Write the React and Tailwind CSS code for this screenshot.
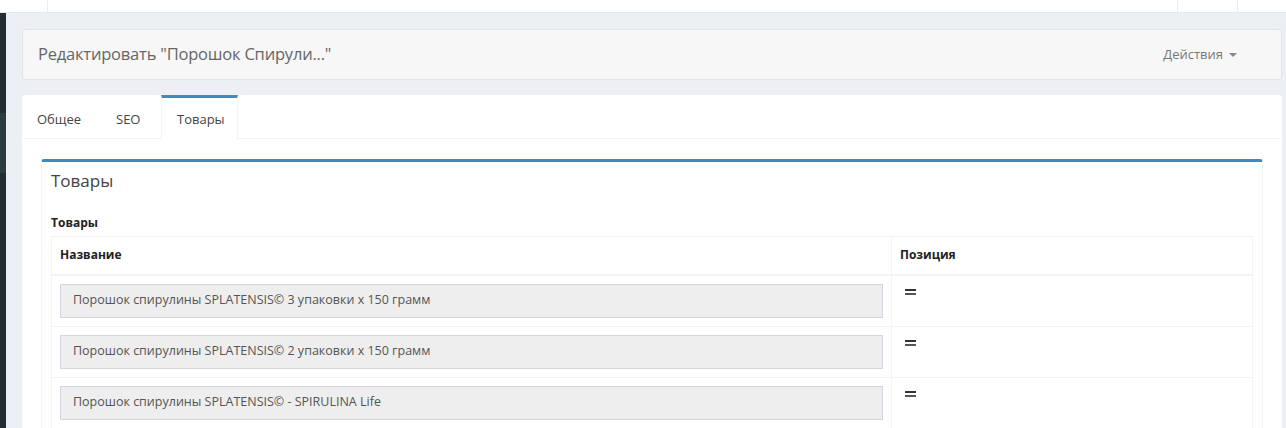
import React from 'react';

const products = [
  'Порошок спирулины SPLATENSIS© 3 упаковки x 150 грамм',
  'Порошок спирулины SPLATENSIS© 2 упаковки x 150 грамм',
  'Порошок спирулины SPLATENSIS© - SPIRULINA Life',
];

const DragHandle = () => (
  <div className="flex flex-col gap-[2px] w-[11px] mt-[5px]">
    <div className="h-[2px] bg-[#333]" />
    <div className="h-[2px] bg-[#555]" />
  </div>
);

export default function App() {
  return (
    <div className="relative w-[1286px] h-[428px] overflow-hidden bg-[#ecf0f5] text-[#333]" style={{ fontFamily: '"Open Sans", "Noto Sans", sans-serif' }}>
      {/* Top bar */}
      <div className="flex h-[13px] bg-white border-b border-[#e5e8ee]">
        <div className="w-[48px] border-r border-[#eee]" />
        <div className="flex-1" />
        <div className="w-[60px] border-l border-[#eee]" />
        <div className="w-[49px] border-l border-[#eee]" />
      </div>

      <div className="flex h-[415px]">
        {/* Sidebar edge */}
        <div className="w-[6px] flex flex-col bg-[#222d32]">
          <div className="h-[100px]" />
          <div className="h-[60px] bg-[#2c3b41]" />
        </div>

        {/* Content */}
        <div className="flex-1 pl-[16px] pr-[4px] pt-[16px]">
          {/* Page header */}
          <div className="h-[51px] flex items-center justify-between px-[15px] bg-[#f7f7f7] border border-[#e3e5e8] rounded-[3px]">
            <h1 className="text-[16.5px] text-[#666] tracking-[-0.2px]">Редактировать "Порошок Спирули..."</h1>
            <div className="flex items-center gap-[6px] pr-[29px] text-[13px] text-[#777]">
              Действия
              <span className="w-0 h-0 border-l-[4px] border-r-[4px] border-t-[4px] border-l-transparent border-r-transparent border-t-[#888]" />
            </div>
          </div>

          {/* Tabs panel */}
          <div className="mt-[15px] bg-white rounded-t-[3px] h-[400px]">
            <div className="flex h-[44px] border-b border-[#f4f4f4] text-[13px] text-[#444]">
              <div className="w-[79px] pl-[15px] pt-[15px]">Общее</div>
              <div className="w-[60px] pl-[15px] pt-[15px]">SEO</div>
              <div className="w-[77px] border-t-[3px] border-[#3c8dbc] border-x border-x-[#f4f4f4] pt-[12px] pl-[15px] bg-white h-[45px]">Товары</div>
            </div>

            <div className="px-[19px] pt-[20px]">
              <div className="border-t-[3px] border-[#3c8dbc] rounded-t-[3px] border-x border-x-[#f4f4f4] px-[9px] h-[300px]">
                <h3 className="text-[17px] leading-[24px] text-[#444] pt-[7px] pb-[17px]">Товары</h3>
                <div className="text-[12px] leading-[17px] font-bold text-[#222] pt-[4px] pb-[5px]">Товары</div>
                <table className="w-full border-collapse border border-[#f4f4f4] text-[12px]">
                  <thead>
                    <tr className="h-[38px] border-b-2 border-[#f4f4f4]">
                      <th className="w-[840px] text-left font-bold text-[#222] px-[8px] border-r border-[#f4f4f4]">Название</th>
                      <th className="text-left font-bold text-[#222] px-[8px]">Позиция</th>
                    </tr>
                  </thead>
                  <tbody>
                    {products.map((p) => (
                      <tr key={p} className="h-[51px] border-b border-[#f4f4f4]">
                        <td className="px-[8px] py-[8px] border-r border-[#f4f4f4] align-top">
                          <div className="h-[34px] flex items-center px-[12px] bg-[#eee] border border-[#d2d6de] text-[12.5px] text-[#555]">{p}</div>
                        </td>
                        <td className="px-[13px] py-[8px] align-top">
                          <DragHandle />
                        </td>
                      </tr>
                    ))}
                  </tbody>
                </table>
              </div>
            </div>
          </div>
        </div>
      </div>
    </div>
  );
}
